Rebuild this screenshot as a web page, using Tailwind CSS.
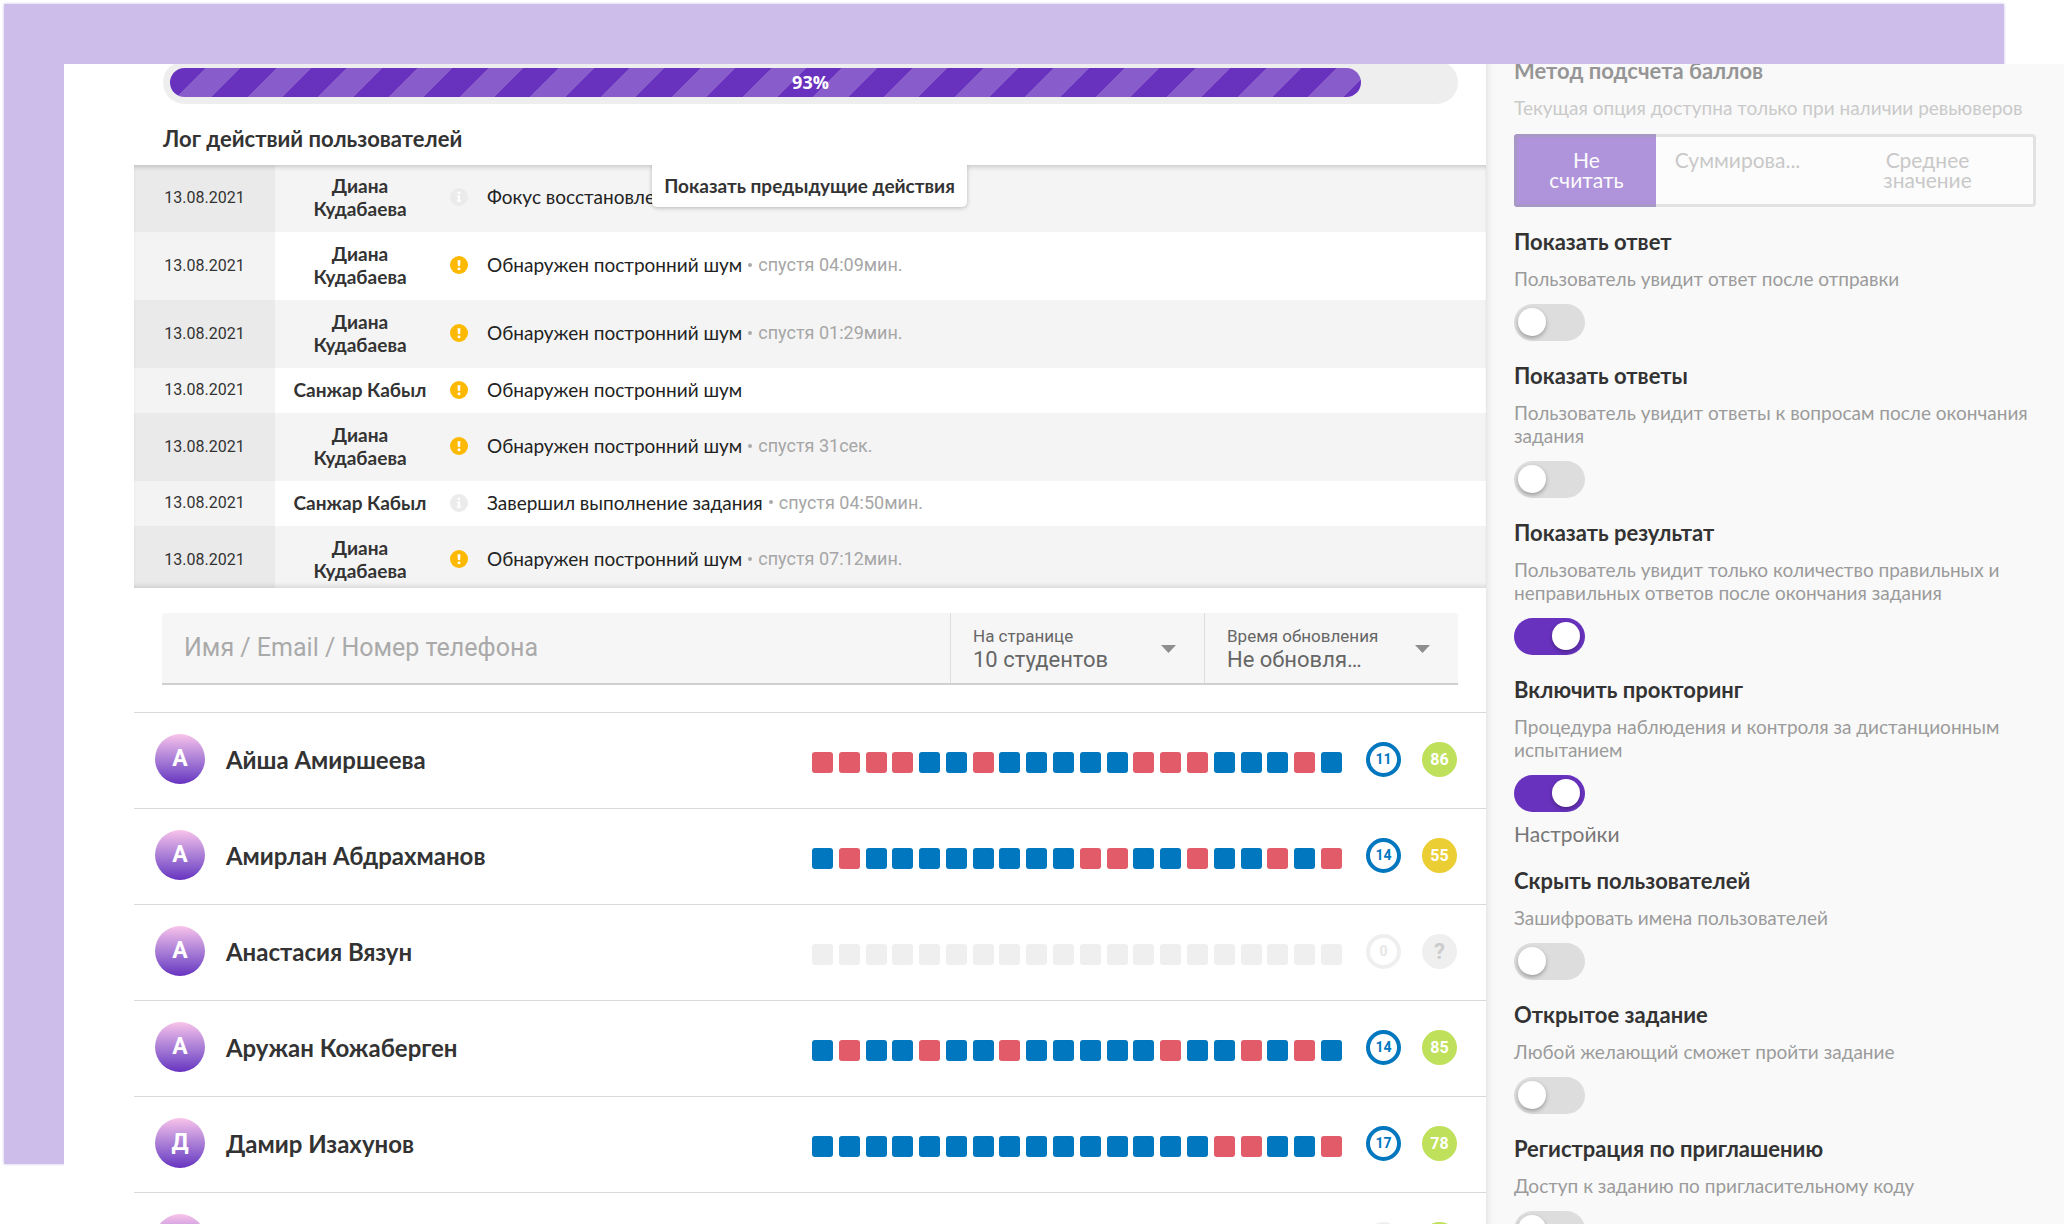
<!DOCTYPE html>
<html lang="ru">
<head>
<meta charset="utf-8">
<title>Результаты задания</title>
<script src="https://cdn.jsdelivr.net/npm/@tailwindcss/browser@4"></script>
</head>
<body class="relative h-screen overflow-hidden bg-white font-[Lato,'Open_Sans',sans-serif] text-[#333]">

<div class="absolute top-1 left-1 right-[60px] bottom-[60px] bg-[#cdbdea] shadow-[0_0_3px_#cdbdea]"></div>

<div class="relative h-full pt-16 pl-16">
<div class="grid h-full grid-cols-[minmax(0,1fr)_578px] overflow-hidden bg-white">

<main class="min-w-0 overflow-hidden pl-[70px]">
  <div class="-mt-[3px] ml-[29px] mr-7">
    <div role="progressbar" aria-valuenow="93" aria-valuemin="0" aria-valuemax="100" class="relative h-[43px] rounded-full bg-[#eee] p-[7px]">
      <div class="h-full w-[93%] rounded-full bg-[repeating-linear-gradient(135deg,#6832bf_0_25px,#885dcb_25px_50px)]"></div>
      <span class="absolute inset-0 flex items-center justify-center font-['Open_Sans',sans-serif] text-[18px] font-bold text-white">93%</span>
    </div>
  </div>

  <h2 class="ml-[29px] mt-[21px] mb-3 text-[22px] leading-7 font-bold">Лог действий пользователей</h2>

  <section class="relative h-[423px] overflow-hidden">
    <table class="-mt-px w-full table-fixed border-collapse text-[19px] leading-[23px]">
      <colgroup><col class="w-[141px]"><col class="w-[170px]"><col class="w-[42px]"><col></colgroup>
      <tbody id="log"></tbody>
    </table>
    <div class="pointer-events-none absolute inset-0 shadow-[inset_0_5px_5px_-3px_rgba(0,0,0,0.18),inset_0_-5px_5px_-3px_rgba(0,0,0,0.12)]"></div>
    <button class="absolute top-0 left-[518px] h-[42px] w-[315px] rounded-b-[5px] bg-white text-[19px] font-bold shadow-[0_1px_4px_rgba(0,0,0,0.25)]">Показать предыдущие действия</button>
  </section>

  <form class="mt-[25px] mb-[27px] ml-7 mr-7 flex h-[72px] rounded-t-[3px] border-b-2 border-[#d0d0d0] bg-[#f6f6f6] font-[Roboto,sans-serif] text-[#666]">
    <input type="text" aria-label="Поиск" placeholder="Имя / Email / Номер телефона" class="min-w-0 flex-1 pl-[22px] text-[25px] placeholder:text-[#aaa]">
    <div class="relative flex w-[254px] flex-col border-l border-[#dedede] pt-3 pl-[22px]">
      <label for="per-page" class="text-[17px] leading-[22px]">На странице</label>
      <select id="per-page" class="h-[26px] w-[160px] appearance-none text-[22px] leading-[26px]"><option>10 студентов</option></select>
      <svg class="pointer-events-none absolute top-8 right-7 h-[8px] w-[15px]" viewBox="0 0 15 8"><path d="M0 0h15L7.500 8z" fill="#8e8e8e"/></svg>
    </div>
    <div class="relative flex w-[254px] flex-col border-l border-[#dedede] pt-3 pl-[22px]">
      <label for="refresh" class="text-[17px] leading-[22px]">Время обновления</label>
      <select id="refresh" class="h-[26px] w-[160px] appearance-none text-[22px] leading-[26px]"><option>Не обновля…</option></select>
      <svg class="pointer-events-none absolute top-8 right-7 h-[8px] w-[15px]" viewBox="0 0 15 8"><path d="M0 0h15L7.500 8z" fill="#8e8e8e"/></svg>
    </div>
  </form>

  <ul id="students"></ul>
</main>

<aside class="overflow-hidden bg-[#f9f9f9] pr-7 pl-7 shadow-[inset_8px_0_8px_-8px_rgba(0,0,0,0.15)]">
  <section class="-mt-1.5 opacity-50">
    <h3 class="text-[22px] leading-[26px] font-bold">Метод подсчета баллов</h3>
    <p class="mt-3 text-[19px] leading-[23px] whitespace-nowrap text-[#9b9b9b]">Текущая опция доступна только при наличии ревьюверов</p>
    <div class="mt-[15px] grid h-[73px] grid-cols-[142px_163px_1fr] overflow-hidden rounded-[4px] bg-white text-[21px] leading-5 text-[#999] shadow-[inset_0_0_0_3px_#ccc]">
      <button disabled class="flex items-start justify-center border-3 border-r-0 border-[#5a3a94] bg-[#6832bf] pt-[13px] text-white">Не<br>считать</button>
      <button disabled class="flex items-start justify-center pt-4">Суммирова...</button>
      <button disabled class="flex items-start justify-center pt-4">Среднее<br>значение</button>
    </div>
  </section>
  <div id="options" class="mt-[22px] flex flex-col gap-[22px]"></div>
</aside>

</div>
</div>

<script>
const D = 'Диана Кудабаева', S = 'Санжар Кабыл', N = 'Обнаружен постронний шум';
const log = [
  [D, 0, 'Фокус восстановлен в браузере на вкладку', ''],
  [D, 1, N, '04:09мин.'],
  [D, 1, N, '01:29мин.'],
  [S, 1, N, ''],
  [D, 1, N, '31сек.'],
  [S, 0, 'Завершил выполнение задания', '04:50мин.'],
  [D, 1, N, '07:12мин.'],
];
const warn = '<svg class="size-[18px]" viewBox="0 0 18 18"><circle cx="9" cy="9" r="9" fill="#fdb900"/><path d="M7.500 4.200h3l-.4 5.900H7.900z" fill="#fff"/><circle cx="9" cy="12.700" r="1.500" fill="#fff"/></svg>';
const info = '<svg class="size-[18px]" viewBox="0 0 18 18"><circle cx="9" cy="9" r="9" fill="#ebebeb"/><circle cx="9" cy="4.900" r="1.400" fill="#fff"/><path d="M7 7.500h3v4.800h1.200v1.400H6.800v-1.400H8V8.900H7z" fill="#fff"/></svg>';
document.getElementById('log').innerHTML = log.map(([who, w, text, t], i) => `
  <tr class="${i % 2 ? 'bg-white' : 'bg-[#f4f4f4]'} ${who === D ? 'h-[68px]' : 'h-[45px]'}">
    <td class="${i % 2 ? 'bg-[#f3f3f3]' : 'bg-[#eaeaea]'} px-0 pt-0 pb-0.5 text-center font-[Roboto,sans-serif] text-[16px]">13.08.2021</td>
    <td class="px-4 pt-0 pb-[3px] text-center font-bold">${who}</td>
    <td class="pt-0 pb-0.5 pl-[5px]">${w ? warn : info}</td>
    <td class="px-0 pt-0 pb-[3px] whitespace-nowrap text-[#222]"><div class="flex items-center"><span>${text}</span>${t ? `<span class="mx-1.5 size-[4px] rounded-full bg-[#aaa]"></span><span class="font-[Roboto,sans-serif] text-[18px] text-[#a6a6a6]">спустя ${t}</span>` : ''}</div></td>
  </tr>`).join('');

const color = { r: 'bg-[#e15b68]', b: 'bg-[#0077bf]', n: 'bg-[#efefef]' };
const students = [
  ['Айша Амиршеева', 'rrrrbbrbbbbbrrrbbbrb', 11, 86, 'bg-[#bfe05b]'],
  ['Амирлан Абдрахманов', 'brbbbbbbbbrrbbrbbrbr', 14, 55, 'bg-[#ebce34]'],
  ['Анастасия Вязун', 'nnnnnnnnnnnnnnnnnnnn', 0, '?', 'bg-[#efefef]'],
  ['Аружан Кожаберген', 'brbbrbbrbbbbbrbbrbrb', 14, 85, 'bg-[#bfe05b]'],
  ['Дамир Изахунов', 'bbbbbbbbbbbbbbbrrbbr', 17, 78, 'bg-[#bfe05b]'],
  ['', '', '', '', 'bg-[#bfe05b]'],
];
document.getElementById('students').innerHTML = students.map(([name, marks, n, score, bg]) => `
  <li class="flex h-24 items-center border-t border-[#d9d9d9] pl-[21px] pr-[29px]">
    <span class="mr-[21px] mb-[3px] flex size-[50px] items-center justify-center rounded-full bg-linear-to-b from-[#f9c3e9] to-[#6832bf] font-[Roboto,sans-serif] text-[23px] font-bold text-white">${name.charAt(0)}</span>
    <span class="mb-0.5 flex-1 text-[24px] font-bold">${name}</span>
    <span class="mr-6 flex w-[530px] justify-between pt-1">${[...marks].map(m => `<i class="size-[21px] rounded-[3px] ${color[m]}"></i>`).join('')}</span>
    <span class="mr-[21px] mb-0.5 flex size-[35px] items-center justify-center rounded-full border-4 font-[Roboto,sans-serif] text-[14px] font-bold ${n ? 'border-[#0077bf] text-[#0077bf]' : 'border-[#efefef] text-[#e6e6e6]'}">${n}</span>
    <span class="mb-0.5 flex size-[35px] items-center justify-center rounded-full font-[Roboto,sans-serif] font-bold ${bg} ${score === '?' ? 'text-[22px] text-[#ccc]' : 'text-[16px] text-white'}">${score}</span>
  </li>`).join('');

const options = [
  ['Показать ответ', 'Пользователь увидит ответ после отправки', 0],
  ['Показать ответы', 'Пользователь увидит ответы к вопросам после окончания задания', 0],
  ['Показать результат', 'Пользователь увидит только количество правильных и неправильных ответов после окончания задания', 1],
  ['Включить прокторинг', 'Процедура наблюдения и контроля за дистанционным испытанием', 1, 'Настройки'],
  ['Скрыть пользователей', 'Зашифровать имена пользователей', 0],
  ['Открытое задание', 'Любой желающий сможет пройти задание', 0],
  ['Регистрация по приглашению', 'Доступ к заданию по пригласительному коду', 0],
];
document.getElementById('options').innerHTML = options.map(([title, text, on, link], i) => `
  <section>
    <h3 class="text-[22px] leading-[26px] font-bold"><label for="o${i}">${title}</label></h3>
    <p class="mt-3 text-[19px] leading-[23px] text-[#9b9b9b]">${text}</p>
    <div class="relative mt-3.5 h-[37px] w-[71px]">
      <input id="o${i}" type="checkbox" role="switch" ${on ? 'checked' : ''} class="block h-full w-full appearance-none rounded-full bg-[#ddd] checked:bg-[#6832bf]">
      <span class="pointer-events-none absolute top-1 size-7 rounded-full bg-white shadow-[0_2px_4px_rgba(0,0,0,0.3)] ${on ? 'right-[5px]' : 'left-1'}"></span>
    </div>
    ${link ? `<a href="#" class="mt-2.5 block text-[21px] leading-6 text-[#777]">${link}</a>` : ''}
  </section>`).join('');
</script>
</body>
</html>
